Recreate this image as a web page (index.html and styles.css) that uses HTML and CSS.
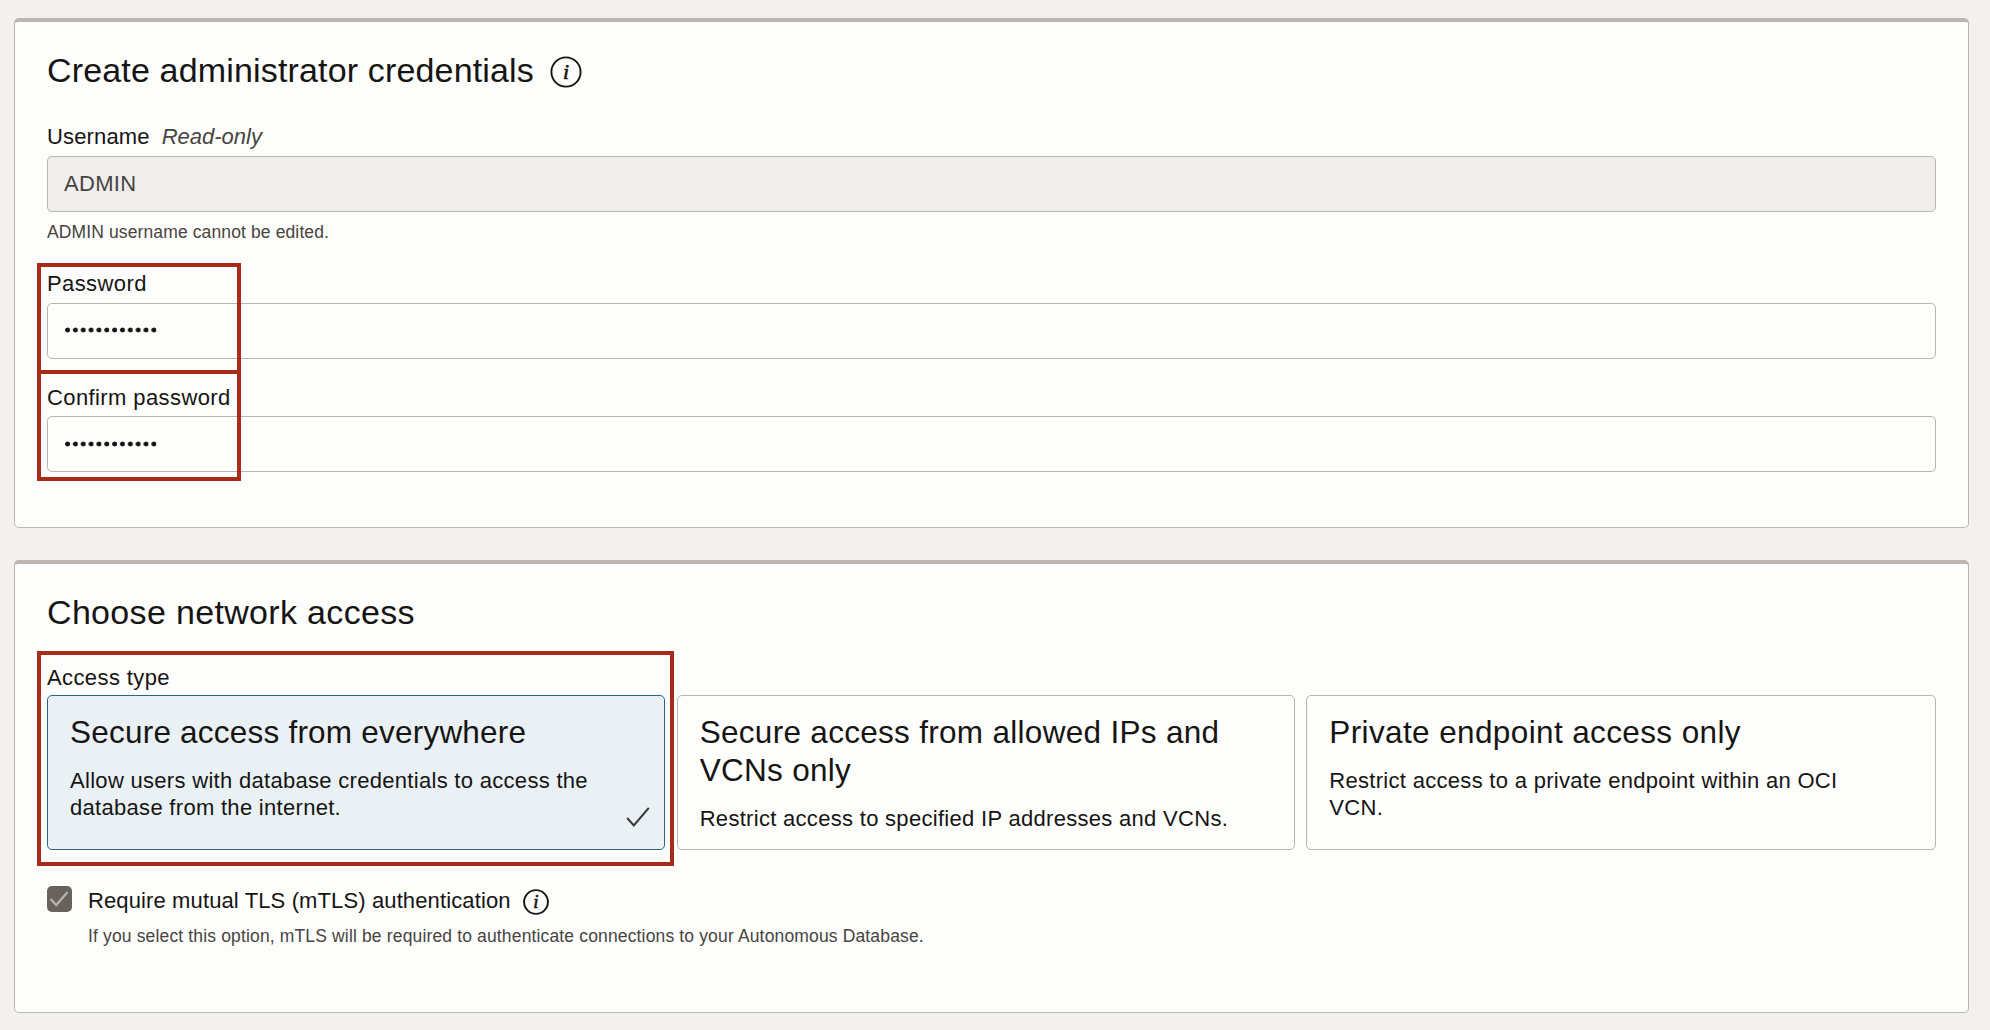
FILE: index.html
```html
<!DOCTYPE html>
<html lang="en">
<head>
<meta charset="utf-8">
<title>Create Autonomous Database</title>
<link rel="stylesheet" href="styles.css">
</head>
<body>
<main class="page">
  <section class="panel credentials">
    <div class="heading">
      <h2>Create administrator credentials</h2>
      <svg class="info info-lg" viewBox="0 0 32 32"><circle cx="16" cy="16" r="14.6"/><text x="16" y="22.6">i</text></svg>
    </div>
    <div class="field field-user">
      <div class="label"><span>Username</span><i>Read-only</i></div>
      <div class="input readonly">ADMIN</div>
      <p class="hint">ADMIN username cannot be edited.</p>
    </div>
    <div class="marked">
      <div class="field field-pass">
        <div class="label wide">Password</div>
        <div class="input"><span class="dots"></span></div>
      </div>
      <div class="field field-confirm">
        <div class="label wide">Confirm password</div>
        <div class="input"><span class="dots"></span></div>
      </div>
      <div class="outline outline-top"></div>
      <div class="outline outline-bottom"></div>
    </div>
  </section>

  <section class="panel network">
    <div class="heading"><h2>Choose network access</h2></div>
    <div class="marked">
      <div class="label wide label-access">Access type</div>
      <div class="options">
        <div class="option selected">
          <h3>Secure access from everywhere</h3>
          <p>Allow users with database credentials to access the<br>database from the internet.</p>
          <svg class="check" viewBox="0 0 24 22"><path d="M1.2 12L7.8 19.4 22.8 1.8"/></svg>
        </div>
        <div class="option">
          <h3>Secure access from allowed IPs and<br>VCNs only</h3>
          <p>Restrict access to specified IP addresses and VCNs.</p>
        </div>
        <div class="option">
          <h3>Private endpoint access only</h3>
          <p>Restrict access to a private endpoint within an OCI<br>VCN.</p>
        </div>
      </div>
      <div class="outline outline-access"></div>
    </div>
    <div class="mtls">
      <span class="box"><svg viewBox="0 0 25 26"><path d="M3.6 13L9.2 19 20.6 6"/></svg></span>
      <div>
        <div class="mtls-title"><span>Require mutual TLS (mTLS) authentication</span>
          <svg class="info info-sm" viewBox="0 0 26 26"><circle cx="13" cy="13" r="11.9"/><text x="13" y="18.6">i</text></svg>
        </div>
        <p class="hint">If you select this option, mTLS will be required to authenticate connections to your Autonomous Database.</p>
      </div>
    </div>
  </section>
</main>
</body>
</html>
```
FILE: styles.css
```css
* { box-sizing: border-box; }
body {
  margin: 0;
  background: #f3f1f0;
  color: #161513;
  font-family: "Liberation Sans", Arial, sans-serif;
  font-size: 22px;
}
h2, h3, p { margin: 0; font-weight: 400; }
.page { display: flex; flex-direction: column; gap: 32px; padding: 18px 21px 0 14px; }
.panel {
  background: #fdfdfc;
  border: 1px solid #bcb6b1;
  border-top-width: 4px;
  border-radius: 5px;
  padding: 0 32px;
}
.credentials { height: 510px; }
.network { height: 453px; }
.heading { display: flex; align-items: center; gap: 16px; height: 98px; padding-bottom: 2px; }
.heading h2 { font-size: 34px; line-height: 40px; letter-spacing: 0.16px; }
.network .heading h2 { letter-spacing: 0.33px; }
.info { fill: none; stroke: #161513; stroke-width: 1.9; }
.info text {
  fill: #161513;
  stroke-width: 0.6;
  font: italic 22px "Liberation Serif", "Times New Roman", serif;
  text-anchor: middle;
}
.info-lg { width: 32px; height: 32px; margin-top: 4px; }
.info-sm { width: 26px; height: 26px; margin-top: 2px; }
.info-sm text { font-size: 19px; }
.label { display: flex; align-items: center; gap: 12px; height: 36px; padding-bottom: 2px; line-height: 26px; letter-spacing: 0.15px; }
.label.wide { letter-spacing: 0.4px; }
.field-confirm .label { padding-bottom: 0; }
.label i { color: #474441; letter-spacing: 0; }
.field-user { height: 147px; }
.input {
  display: flex;
  align-items: center;
  height: 56px;
  padding: 0 16px;
  border: 1px solid #b8b4b0;
  border-radius: 5px;
}
.readonly { background: #efeeed; color: #474441; letter-spacing: 0.3px; }
.hint { color: #474441; font-size: 17.5px; line-height: 22px; letter-spacing: 0.15px; }
.field-user .hint { padding-top: 9px; letter-spacing: 0.12px; }
.marked { position: relative; }
.field-pass { height: 113px; }
.field-pass .input { padding-bottom: 2px; }
.dots {
  width: 94px;
  height: 6px;
  margin-left: 1px;
  background: radial-gradient(circle at 2.6px 3px, #161513 2.1px, transparent 2.8px) 0 0 / 7.85px 6px repeat-x;
}
.outline { position: absolute; left: -10px; border: 4px solid #a62b18; }
.outline-top { top: -4px; width: 204px; height: 111px; }
.outline-bottom { top: 103px; width: 204px; height: 111px; }
.outline-access { top: -11px; width: 637px; height: 215px; }
.label-access { height: 33px; }
.options { display: flex; height: 155px; }
.option {
  position: relative;
  flex: 0 0 618.33px;
  margin-right: 11.33px;
  padding: 17px 22px;
  border: 1px solid #b8b4b0;
  border-radius: 5px;
}
.option:last-child { flex: 1; margin-right: 0; }
.option h3 { font-size: 31.5px; line-height: 38px; letter-spacing: 0.3px; white-space: nowrap; }
.option.selected h3 { letter-spacing: 0.22px; }
.option:last-child h3 { letter-spacing: 0.38px; }
.option p { padding-top: 16px; line-height: 27px; letter-spacing: 0.3px; white-space: nowrap; }
.selected { background: #e9f1f5; border-color: #2c6489; }
.check { position: absolute; right: 14px; bottom: 21px; width: 24px; height: 22px; fill: none; stroke: #393633; stroke-width: 2; }
.mtls { display: flex; gap: 16px; padding-top: 36px; }
.box { width: 25px; height: 26px; border-radius: 5px; background: #68625d; }
.box svg { display: block; fill: none; stroke: #b8b3ae; stroke-width: 2.2; }
.mtls-title { display: flex; align-items: center; gap: 12px; height: 30px; letter-spacing: 0.12px; }
.mtls .hint { padding-top: 9px; }
```
